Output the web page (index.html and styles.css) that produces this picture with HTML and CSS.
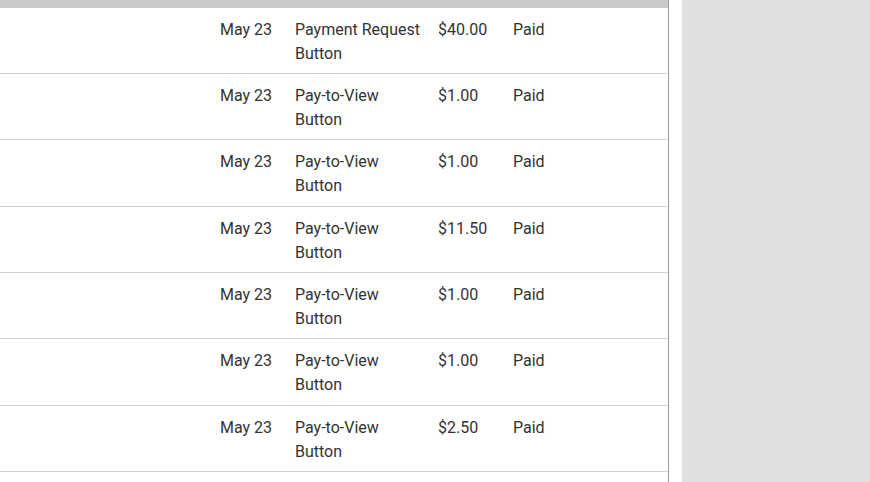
FILE: index.html
```
<!DOCTYPE html>
<html>
<head>
<meta charset="utf-8">
<link rel="stylesheet" href="styles.css">
</head>
<body>
<div class="layout">
  <main class="panel">
    <div class="topbar"></div>
    <div class="row"><div class="date">May 23</div><div class="desc">Payment Request Button</div><div class="amount">$40.00</div><div class="status">Paid</div></div>
    <div class="row"><div class="date">May 23</div><div class="desc">Pay-to-View Button</div><div class="amount">$1.00</div><div class="status">Paid</div></div>
    <div class="row"><div class="date">May 23</div><div class="desc">Pay-to-View Button</div><div class="amount">$1.00</div><div class="status">Paid</div></div>
    <div class="row"><div class="date">May 23</div><div class="desc">Pay-to-View Button</div><div class="amount">$11.50</div><div class="status">Paid</div></div>
    <div class="row"><div class="date">May 23</div><div class="desc">Pay-to-View Button</div><div class="amount">$1.00</div><div class="status">Paid</div></div>
    <div class="row"><div class="date">May 23</div><div class="desc">Pay-to-View Button</div><div class="amount">$1.00</div><div class="status">Paid</div></div>
    <div class="row"><div class="date">May 23</div><div class="desc">Pay-to-View Button</div><div class="amount">$2.50</div><div class="status">Paid</div></div>
  </main>
  <div class="spacer"></div>
  <aside class="side"></aside>
</div>
</body>
</html>
```

FILE: styles.css
```
html, body {
  margin: 0;
  padding: 0;
  height: 100%;
  overflow: hidden;
  background: #ffffff;
}
body {
  font-family: Roboto, "Liberation Sans", sans-serif;
  font-size: 16px;
  line-height: 24px;
  color: #333333;
}
.layout {
  display: flex;
  height: 482px;
}
.panel {
  width: 668px;
  flex: none;
  border-right: 1px solid #999999;
  background: #ffffff;
}
.spacer {
  width: 13px;
  flex: none;
}
.side {
  flex: 1;
  background: #e0e0e0;
}
.topbar {
  height: 7.67px;
  background: #cacaca;
}
.row {
  display: flex;
  padding: 10.2px 0 7.13px;
  border-bottom: 1px solid #d0d0d0;
}
.date {
  width: 272px;
  flex: none;
  text-align: right;
}
.desc {
  width: 130px;
  flex: none;
  margin-left: 23px;
  margin-right: 13px;
}
.amount {
  width: 75px;
  flex: none;
}
.status {
  flex: 1;
}
```
